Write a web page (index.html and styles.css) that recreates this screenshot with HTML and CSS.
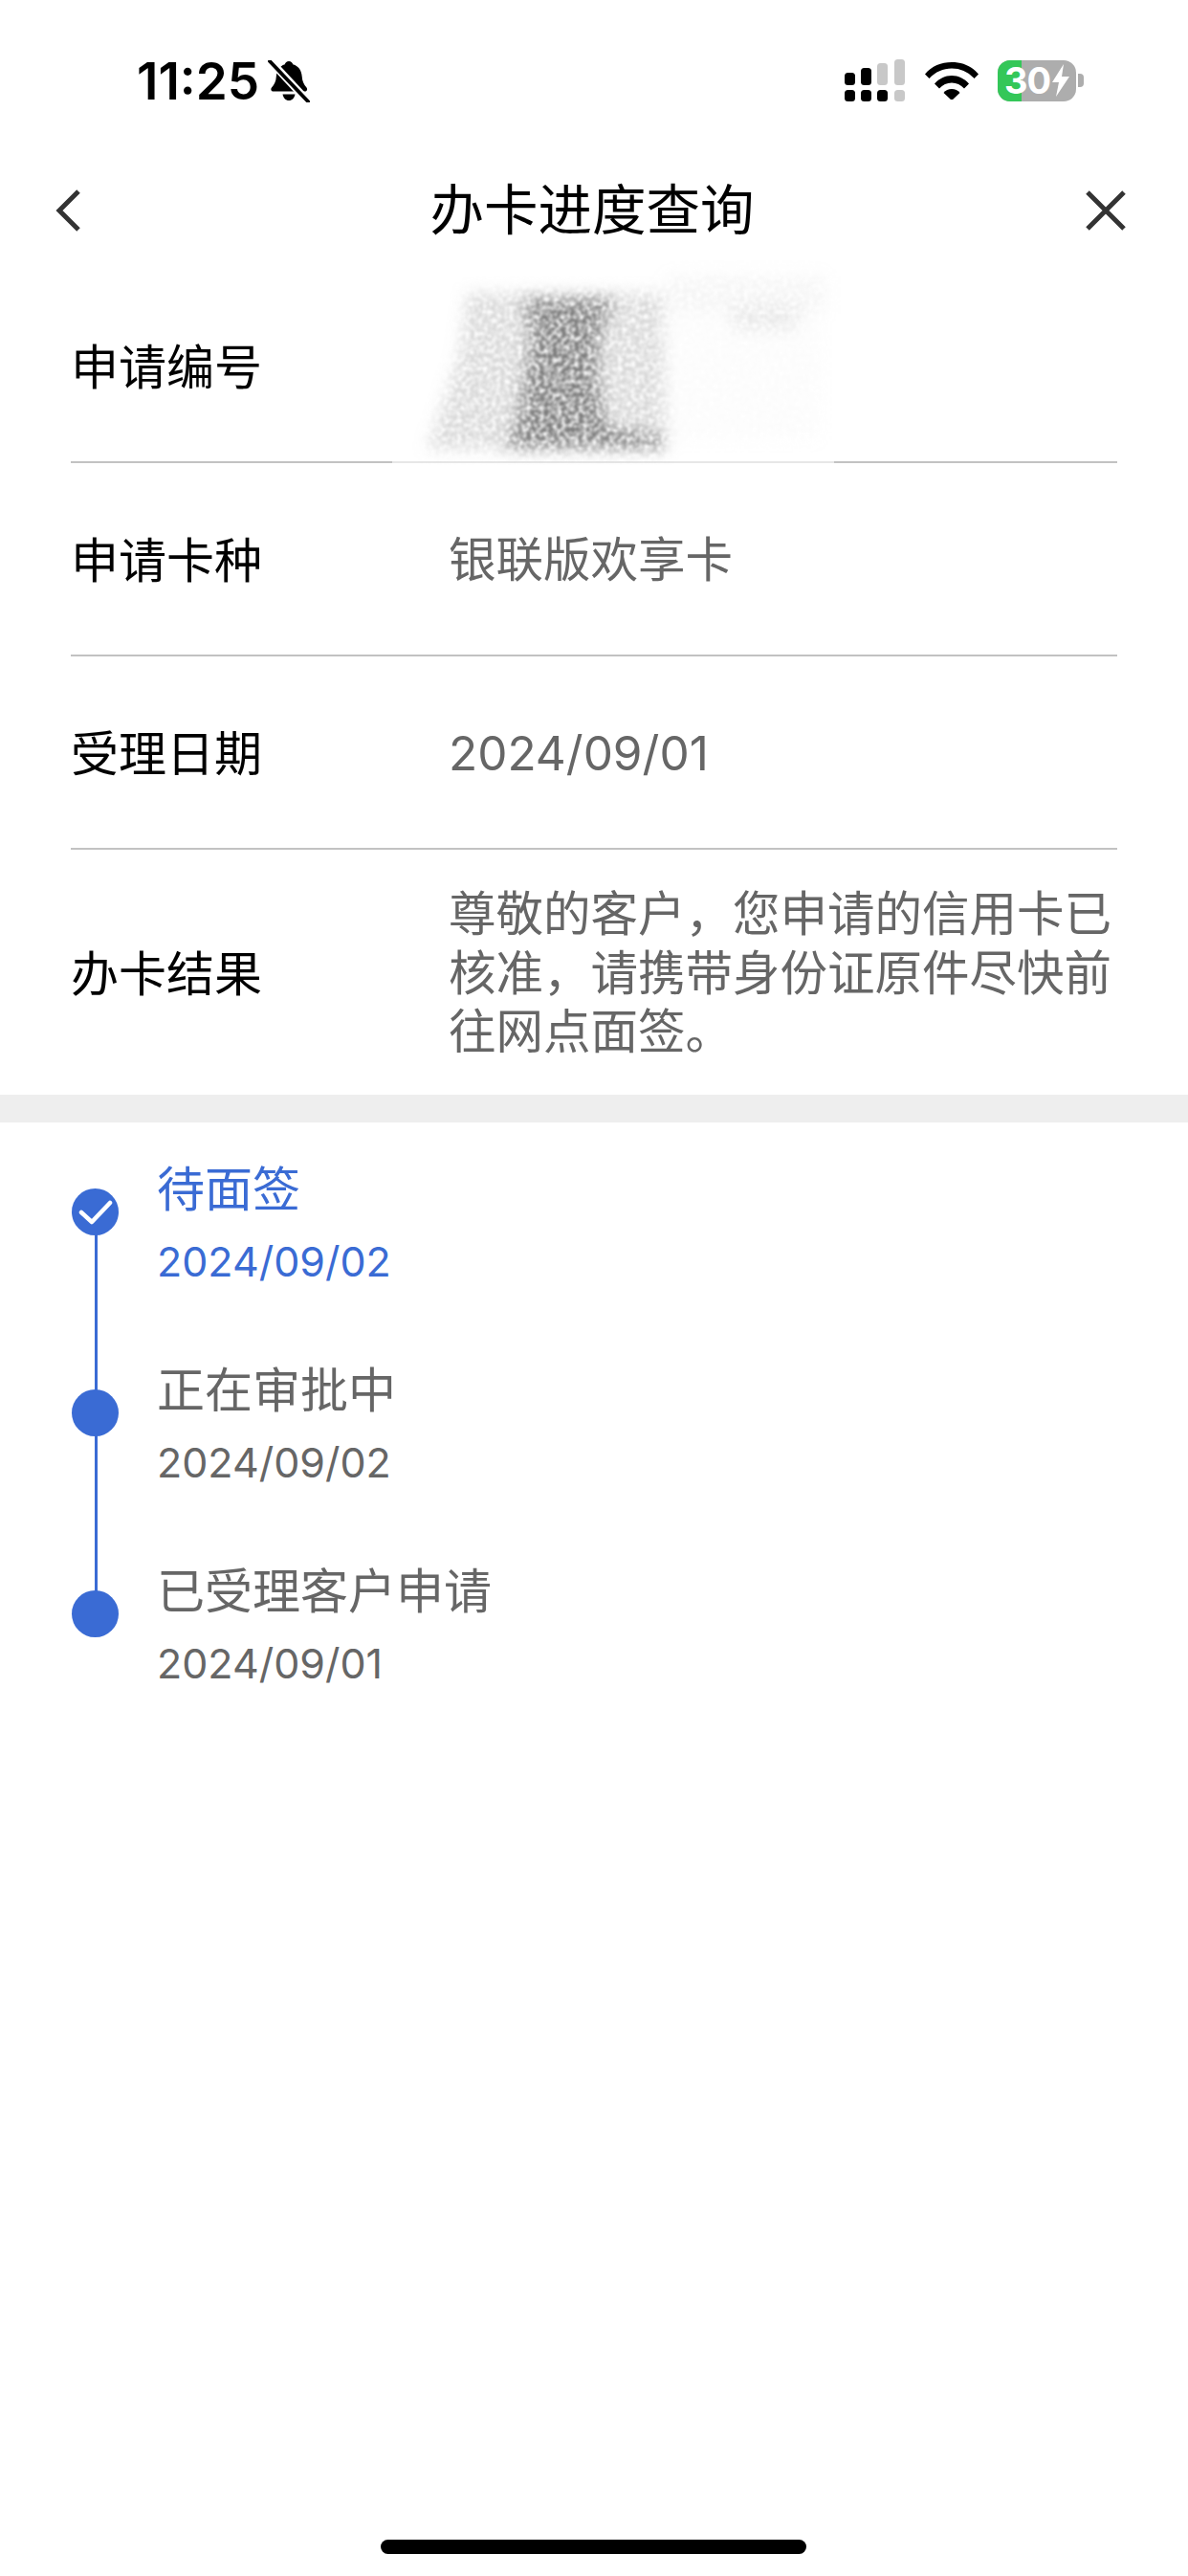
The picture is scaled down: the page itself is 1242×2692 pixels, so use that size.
FILE: index.html
```html
<!DOCTYPE html>
<html lang="zh">
<head>
<meta charset="utf-8">
<title>办卡进度查询</title>
<link rel="stylesheet" href="styles.css">
</head>
<body>
<div class="page">
  <div class="status">
    <div class="status-left">
      <span class="time">11:25</span>
      <svg class="bell" viewBox="0 0 44 44"><path d="M22 1c2.200 0 3.800 1.400 4.200 3.200 6.300 1.800 9 6.700 9.500 12.800.4 5 1.800 8 4.800 11.500 1.300 1.600.5 4-1.500 4H5.500c-2 0-2.800-2.400-1.500-4C7 25 8.500 22 8.800 17 9.300 11 12 6 17.800 4.200 18.200 2.400 19.800 1 22 1z"/><path d="M15.500 35.500h13c-.6 3.800-3.200 6.500-6.500 6.500s-5.900-2.700-6.500-6.500z"/><path d="M1 -1l42 45" stroke="#fff" stroke-width="8" fill="none"/><path d="M2 1l40 42" stroke="#000" stroke-width="3.800" fill="none" stroke-linecap="round"/></svg>
    </div>
    <div class="status-right">
      <svg class="signal" viewBox="0 0 64 44"><g fill="#000"><rect x="0" y="14" width="11" height="13" rx="3.500"/><rect x="17" y="9" width="11" height="18" rx="3.500"/><rect x="0" y="32" width="11" height="12" rx="3.500"/><rect x="17" y="32" width="11" height="12" rx="3.500"/><rect x="34" y="32" width="11" height="12" rx="3.500"/></g><g fill="#c8c8c8"><rect x="34" y="4" width="11" height="23" rx="3.500"/><rect x="52" y="0" width="11" height="27" rx="3.500"/><rect x="52" y="32" width="11" height="12" rx="3.500"/></g></svg>
      <svg class="wifi" viewBox="0 0 56 40"><path d="M0 13.500C7 5 17 1 28 1s21 4 28 12.500l-4.500 4.500C45 11 37 7.500 28 7.500S11 11 4.500 18z"/><path d="M10 23.500C15 18 21 15 28 15s13 3 18 8.500L41 28.500C37.500 24.500 33 22.500 28 22.500S18.500 24.500 15 28.500z"/><path d="M19.500 33c2-2.500 5-4 8.500-4s6.500 1.500 8.500 4L28 41z"/></svg>
      <div class="battery">
        <div class="battery-body"><div class="battery-fill"></div><span class="battery-text">30</span><svg class="bolt" viewBox="0 0 20 34"><path d="M13 0L1 19h7L5 34 19 13h-8z"/></svg></div>
        <div class="battery-tip"></div>
      </div>
    </div>
  </div>

  <div class="nav">
    <svg class="nav-back" viewBox="0 0 32 48"><path d="M26 4L6 24l20 20" fill="none" stroke="#333" stroke-width="5"/></svg>
    <h1 class="nav-title">办卡进度查询</h1>
    <svg class="nav-close" viewBox="0 0 44 44"><path d="M3 3l38 38M41 3L3 41" fill="none" stroke="#333" stroke-width="5"/></svg>
  </div>

  <div class="rows">
    <div class="row row-first">
      <div class="label">申请编号</div>
      <div class="value"></div>
      <svg class="smudge" viewBox="0 0 470 216" aria-hidden="true">
        <defs>
          <filter id="pencil" x="-10%" y="-10%" width="120%" height="120%">
            <feGaussianBlur in="SourceGraphic" stdDeviation="8" result="b"/>
            <feTurbulence type="fractalNoise" baseFrequency="0.22" numOctaves="3" seed="7" result="n"/>
            <feColorMatrix in="n" type="matrix" values="0 0 0 0 0  0 0 0 0 0  0 0 0 0 0  0 0 0 2.200 -0.450" result="g"/>
            <feComposite in="b" in2="g" operator="in" result="c"/>
            <feGaussianBlur in="c" stdDeviation="0.900"/>
          </filter>
        </defs>
        <rect class="smudge-wipe" x="0" y="212" width="462" height="4"/>
        <g filter="url(#pencil)">
          <path d="M78 36h205l4 164H36l14-40 20-60z" fill="#999" opacity=".38"/>
          <rect x="287" y="18" width="166" height="40" fill="#aaa" opacity=".12"/>
          <rect x="355" y="50" width="70" height="26" fill="#999" opacity=".2"/>
          <rect x="287" y="60" width="160" height="130" fill="#bbb" opacity=".05"/>
          <path d="M137 42h95l-16 44v46l8 44 59 10v13H117l12-23 8-44 8-46z" fill="#666" opacity=".8"/>
        </g>
      </svg>
    </div>
    <div class="row row-short">
      <div class="label">申请卡种</div>
      <div class="value">银联版欢享卡</div>
    </div>
    <div class="row row-short">
      <div class="label">受理日期</div>
      <div class="value">2024/09/01</div>
    </div>
    <div class="row row-tall">
      <div class="label">办卡结果</div>
      <div class="value">尊敬的客户，您申请的信用卡已核准，请携带身份证原件尽快前往网点面签。</div>
    </div>
  </div>

  <div class="band"></div>

  <div class="timeline">
    <div class="step step-active">
      <div class="rail"><span class="dot"><svg class="check" viewBox="0 0 36 28"><path d="M3 14l11 10L33 4" fill="none" stroke="#fff" stroke-width="4.500" stroke-linecap="round" stroke-linejoin="round"/></svg></span></div>
      <div class="step-text"><div class="step-title">待面签</div><div class="step-date">2024/09/02</div></div>
    </div>
    <div class="step">
      <div class="rail"><span class="dot"></span></div>
      <div class="step-text"><div class="step-title">正在审批中</div><div class="step-date">2024/09/02</div></div>
    </div>
    <div class="step step-last">
      <div class="rail"><span class="dot"></span></div>
      <div class="step-text"><div class="step-title">已受理客户申请</div><div class="step-date">2024/09/01</div></div>
    </div>
  </div>

  <div class="home-bar"></div>
</div>
</body>
</html>
```
FILE: styles.css
```css
* { box-sizing: border-box; }
html, body { margin: 0; padding: 0; background: #fff; }
body { font-family: Inter, "Noto Sans CJK SC", sans-serif; }
.page { width: 1242px; height: 2692px; display: flex; flex-direction: column; position: relative; overflow: hidden; }

.status { height: 170px; padding: 58px 109px 0 143px; display: flex; justify-content: space-between; align-items: flex-start; }
.status-left { display: flex; align-items: center; gap: 9px; }
.time { font-size: 53px; font-weight: 600; line-height: 54px; color: #000; }
.bell { width: 44px; height: 44px; }
.status-right { display: flex; align-items: center; gap: 20px; padding-top: 4px; }
.signal { width: 64px; height: 44px; }
.wifi { width: 56px; height: 40px; }
.battery { display: flex; align-items: center; gap: 2px; }
.battery-body { width: 82px; height: 43px; border-radius: 13px; background: #adadad; position: relative; display: flex; align-items: center; padding-left: 7px; }
.battery-fill { position: absolute; left: 0; top: 0; bottom: 0; width: 25px; background: #34c759; border-radius: 13px 0 0 13px; }
.battery-text { position: relative; color: #fff; font-size: 38px; font-weight: 700; line-height: 43px; letter-spacing: -1px; }
.bolt { position: relative; width: 20px; height: 34px; fill: #fff; margin-left: 1px; }
.battery-tip { width: 6px; height: 14px; background: #adadad; border-radius: 0 4px 4px 0; }

.nav { height: 100px; padding: 0 62px 0 58px; display: grid; grid-template-columns: 1fr auto 1fr; align-items: center; }
.nav-back { width: 32px; height: 48px; margin-left: -2px; }
.nav-title { margin: 0; font-size: 56.500px; font-weight: 400; line-height: 80px; color: #000; }
.nav-close { width: 44px; height: 44px; justify-self: end; margin-right: 2px; }

.rows { padding: 0 74px; }
.row { display: flex; align-items: center; border-bottom: 2px solid #c2c2c2; position: relative; }
.row-first { height: 214px; padding-top: 12px; }
.row-short { height: 202px; }
.row-tall { height: 256px; border-bottom: 0; }
.label { width: 395px; flex: none; font-size: 50px; line-height: 62px; padding-top: 3px; color: #000; }
.value { flex: 1; font-size: 49.500px; line-height: 61.500px; padding-top: 3px; color: #666; margin-right: -6px; }
.smudge { position: absolute; left: 336px; top: 0; width: 470px; height: 216px; pointer-events: none; }
.smudge-wipe { fill: #fff; opacity: .6; }

.band { height: 29px; background: #eee; }

.timeline { padding: 37px 75px 0; }
.step { display: flex; height: 210px; position: relative; }
.rail { width: 89px; flex: none; position: relative; }
.rail::after { content: ""; position: absolute; left: 24px; top: 57px; width: 3px; height: 210px; background: #3a6bd4; }
.step-last .rail::after { display: none; }
.dot { position: absolute; left: 0; top: 32px; width: 49px; height: 49px; border-radius: 50%; background: #3a6bd4; display: flex; align-items: center; justify-content: center; z-index: 1; }
.check { width: 36px; height: 28px; }
.step-title { font-size: 50px; line-height: 66px; color: #666; }
.step-date { font-size: 43px; line-height: 60px; margin-top: 12px; color: #666; }
.step-active .step-title, .step-active .step-date { color: #3a6bd4; }

.home-bar { position: absolute; left: 398px; bottom: 23px; width: 445px; height: 15px; border-radius: 8px; background: #000; }
```
